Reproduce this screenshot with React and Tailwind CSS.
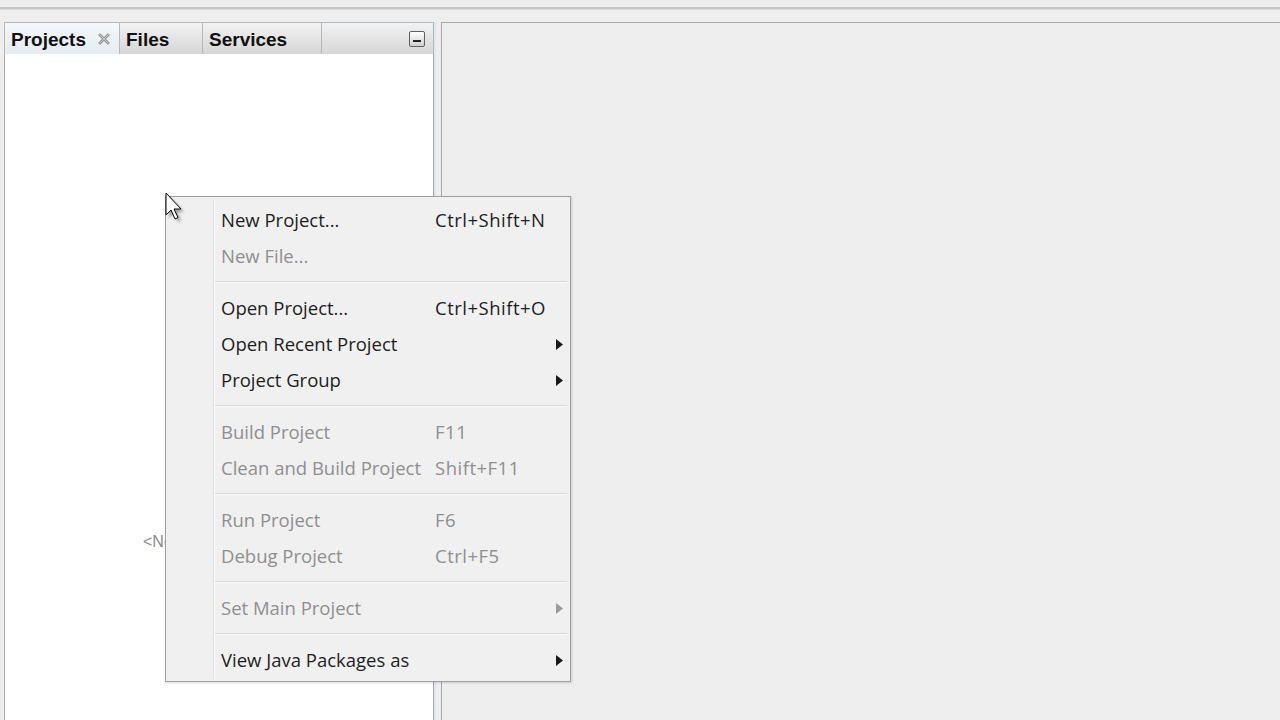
import React from "react";

const Arrow = ({ disabled }) => (
  <svg width="7" height="11" viewBox="0 0 7 11" className="block">
    <path d="M0 0 L7 5.5 L0 11 Z" fill={disabled ? "#9a9a9a" : "#1a1a1a"} />
  </svg>
);

const Item = ({ label, shortcut, disabled, sub }) => (
  <div className={"flex items-center h-[36px] pl-[55px] pr-[7px] " + (disabled ? "text-[#8f8f8f]" : "text-[#1e1e1e]")}>
    <span className="w-[214px] whitespace-nowrap">{label}</span>
    <span className="flex-1 whitespace-nowrap tracking-[0.5px]">{shortcut}</span>
    {sub && <Arrow disabled={disabled} />}
  </div>
);

const Sep = () => (
  <div className="h-[16px] flex items-center pl-[48px] pr-[3px]">
    <div className="w-full h-[2px] border-t border-[#d9d9d9] border-b border-b-[#fafafa]" />
  </div>
);

const Tab = ({ children, w, selected }) => (
  <div
    className={
      "h-[32px] flex items-center px-[6px] pt-[3px] font-bold text-[19px] text-[#111] border-r border-[#b8b8b8] " +
      (selected
        ? "bg-gradient-to-b from-[#f4f7fb] to-[#e6ecf3] border border-[#9fb6cf] border-b-0"
        : "bg-gradient-to-b from-[#f2f2f2] to-[#d6d6d6] border-t border-[#b8b8b8]")
    }
    style={{ width: w }}
  >
    {children}
  </div>
);

export default function App() {
  return (
    <div
      className="relative w-[1280px] h-[720px] overflow-hidden bg-[#eeeeee]"
      style={{ fontFamily: '"Liberation Sans", Arial, sans-serif' }}
    >
      <div className="h-[7px]" />
      <div className="h-[3px] bg-[#c6c6c6] border-b border-[#dadada]" />
      <div className="h-[12px]" />
      <div className="flex h-[698px]">
        {/* left panel */}
        <div className="ml-[4px] w-[430px] flex flex-col">
          <div className="flex h-[32px]">
            <Tab w="116px" selected>
              <span>Projects</span>
              <svg width="12" height="12" viewBox="0 0 12 12" className="ml-auto mr-[3px] mb-[3px]">
                <path d="M2 2 L10 10 M10 2 L2 10" stroke="#9a9a9a" strokeWidth="3" strokeLinecap="round" />
                <path d="M2 2 L10 10 M10 2 L2 10" stroke="#c8c8c8" strokeWidth="1" strokeLinecap="round" />
              </svg>
            </Tab>
            <Tab w="83px">Files</Tab>
            <Tab w="119px">Services</Tab>
            <div className="flex-1 h-[32px] flex items-center justify-end pr-[8px] bg-gradient-to-b from-[#f2f2f2] to-[#d6d6d6] border-t border-r border-[#b0b8c4]">
              <div className="w-[16px] h-[16px] border border-[#606060] rounded-[2px] bg-gradient-to-b from-[#ffffff] to-[#d0d0d0] flex items-end justify-center pb-[4px]">
                <div className="w-[8px] h-[2px] bg-[#222]" />
              </div>
            </div>
          </div>
          <div className="flex-1 bg-white border-l border-r border-[#a8a8a8] pt-[476px] pl-[138px]">
            <span className="block w-[22px] overflow-hidden text-[16px] text-[#8a8a8a] whitespace-nowrap">&lt;No Project Open&gt;</span>
          </div>
        </div>
        {/* splitter */}
        <div className="w-[7px] flex">
          <div className="w-[2px] bg-[#dfe6ef]" />
        </div>
        {/* editor */}
        <div className="flex-1 border-l border-t border-[#a8a8a8] bg-[#eeeeee]" />
      </div>

      {/* context menu */}
      <div
        className="absolute left-[165px] top-[196px] w-[406px] h-[486px] bg-[#f0f0f0] border border-[#a0a0a0] text-[18.5px] shadow-[1px_1px_2px_rgba(0,0,0,0.15)]"
        style={{ fontFamily: '"Open Sans", "Noto Sans", sans-serif' }}
      >
        <div className="absolute left-[47px] top-[2px] bottom-[2px] w-[2px] border-l border-[#dedede] border-r border-r-[#fbfbfb]" />
        <div className="pt-[5px]">
          <Item label="New Project..." shortcut="Ctrl+Shift+N" />
          <Item label="New File..." disabled />
          <Sep />
          <Item label="Open Project..." shortcut="Ctrl+Shift+O" />
          <Item label="Open Recent Project" sub />
          <Item label="Project Group" sub />
          <Sep />
          <Item label="Build Project" shortcut="F11" disabled />
          <Item label="Clean and Build Project" shortcut="Shift+F11" disabled />
          <Sep />
          <Item label="Run Project" shortcut="F6" disabled />
          <Item label="Debug Project" shortcut="Ctrl+F5" disabled />
          <Sep />
          <Item label="Set Main Project" disabled sub />
          <Sep />
          <Item label="View Java Packages as" sub />
        </div>
      </div>

      {/* mouse cursor */}
      <svg className="absolute left-[163px] top-[190px]" width="26" height="34" viewBox="0 0 26 34">
        <defs>
          <filter id="sh" x="-50%" y="-50%" width="200%" height="200%">
            <feGaussianBlur stdDeviation="1.5" />
          </filter>
        </defs>
        <path d="M4 4 L4 26 L9 21 L13 30 L16 28.5 L12 20 L19 20 Z" fill="rgba(0,0,0,0.35)" filter="url(#sh)" transform="translate(2,2)" />
        <path d="M3 3 L3 25 L8 20 L12 29 L15 27.5 L11 19 L18 19 Z" fill="#ffffff" stroke="#000000" strokeWidth="1" strokeLinejoin="round" />
      </svg>
    </div>
  );
}
